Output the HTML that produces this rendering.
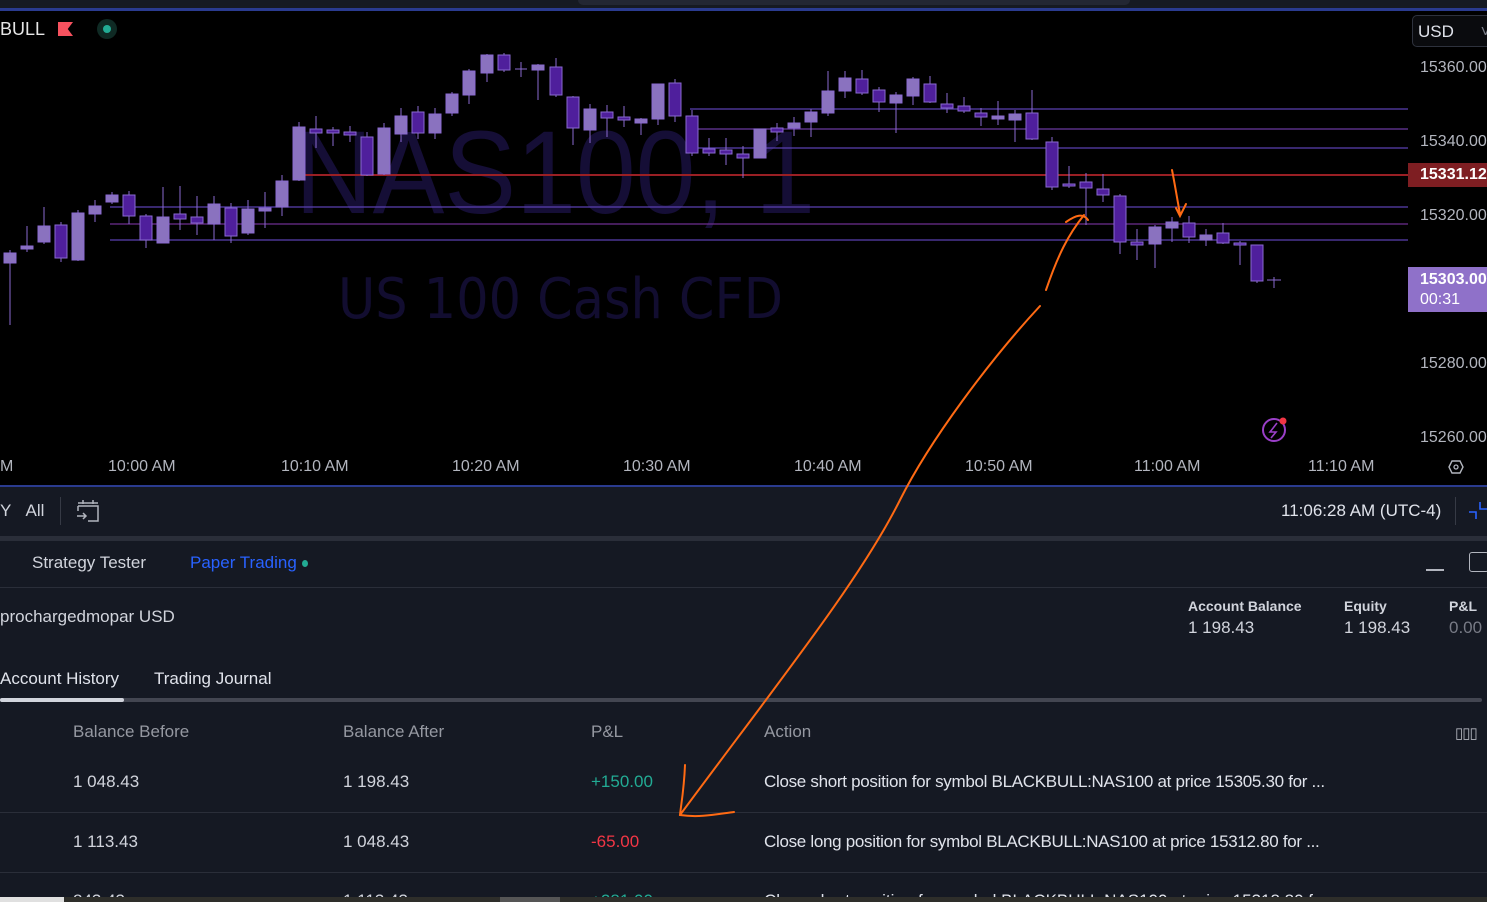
<!DOCTYPE html>
<html><head><meta charset="utf-8"><style>
*{margin:0;padding:0;box-sizing:border-box}
html,body{width:1487px;height:902px;overflow:hidden}
body{background:#000;font-family:"Liberation Sans",sans-serif;position:relative;color:#d1d4dc}
.a{position:absolute;white-space:nowrap}
.ax{color:#b2b5be;font-size:16px}
.t{font-size:17px}
</style></head><body>
<div class="a" style="left:0;top:0;width:1487px;height:8px;background:#161a22"></div>
<div class="a" style="left:578px;top:0;width:552px;height:5px;background:#232733;border-radius:0 0 6px 6px"></div>
<div class="a" style="left:0;top:8px;width:1487px;height:3px;background:#2a3b8f"></div>

<svg class="a" style="left:0;top:0" width="1487" height="485">
<text x="295" y="213" font-family="Liberation Sans" font-size="118" fill="#150e36" textLength="520" lengthAdjust="spacingAndGlyphs">NAS100, 1</text>
<text x="338" y="318" font-family="DejaVu Sans" font-size="56" fill="#120d30" textLength="445" lengthAdjust="spacingAndGlyphs">US 100 Cash CFD</text>
<g stroke-width="1.3">
<line x1="690" y1="109" x2="1408" y2="109" stroke="#5a40b0"/>
<line x1="690" y1="129" x2="1408" y2="129" stroke="#6a3aa0"/>
<line x1="690" y1="148" x2="1408" y2="148" stroke="#5a40b0"/>
<line x1="300" y1="175" x2="1408" y2="175" stroke="#9a1f24" stroke-width="2"/>
<line x1="110" y1="207" x2="1408" y2="207" stroke="#5a40b0"/>
<line x1="110" y1="224" x2="1408" y2="224" stroke="#6e2f90"/>
<line x1="110" y1="240" x2="1408" y2="240" stroke="#5a40b0"/>
</g>
<g stroke="#8a6ad0" stroke-width="1">
<line x1="10" y1="250" x2="10" y2="325"/><rect x="4" y="253" width="12" height="10" fill="#8a72bf"/>
<line x1="27" y1="226" x2="27" y2="252"/><rect x="21" y="246" width="12" height="3" fill="#8a72bf"/>
<line x1="44" y1="207" x2="44" y2="244"/><rect x="38" y="226" width="12" height="16" fill="#8a72bf"/>
<line x1="61" y1="222" x2="61" y2="262"/><rect x="55" y="225" width="12" height="33" fill="#4f1f9c"/>
<line x1="78" y1="210" x2="78" y2="261"/><rect x="72" y="213" width="12" height="47" fill="#8a72bf"/>
<line x1="95" y1="200" x2="95" y2="222"/><rect x="89" y="206" width="12" height="8" fill="#8a72bf"/>
<line x1="112" y1="192" x2="112" y2="204"/><rect x="106" y="195" width="12" height="7" fill="#8a72bf"/>
<line x1="129" y1="191" x2="129" y2="224"/><rect x="123" y="195" width="12" height="21" fill="#4f1f9c"/>
<line x1="146" y1="214" x2="146" y2="248"/><rect x="140" y="216" width="12" height="24" fill="#4f1f9c"/>
<line x1="163" y1="187" x2="163" y2="243"/><rect x="157" y="217" width="12" height="26" fill="#8a72bf"/>
<line x1="180" y1="186" x2="180" y2="230"/><rect x="174" y="214" width="12" height="5" fill="#4f1f9c"/>
<line x1="197" y1="196" x2="197" y2="235"/><rect x="191" y="217" width="12" height="6" fill="#4f1f9c"/>
<line x1="214" y1="196" x2="214" y2="240"/><rect x="208" y="204" width="12" height="20" fill="#8a72bf"/>
<line x1="231" y1="203" x2="231" y2="243"/><rect x="225" y="208" width="12" height="28" fill="#4f1f9c"/>
<line x1="248" y1="200" x2="248" y2="235"/><rect x="242" y="209" width="12" height="24" fill="#8a72bf"/>
<line x1="265" y1="192" x2="265" y2="228"/><rect x="259" y="208" width="12" height="3" fill="#8a72bf"/>
<line x1="282" y1="175" x2="282" y2="216"/><rect x="276" y="181" width="12" height="26" fill="#8a72bf"/>
<line x1="299" y1="122" x2="299" y2="181"/><rect x="293" y="127" width="12" height="53" fill="#8a72bf"/>
<line x1="316" y1="116" x2="316" y2="148"/><rect x="310" y="129" width="12" height="4" fill="#4f1f9c"/>
<line x1="333" y1="127" x2="333" y2="146"/><rect x="327" y="130" width="12" height="3" fill="#4f1f9c"/>
<line x1="350" y1="126" x2="350" y2="142"/><rect x="344" y="132" width="12" height="3" fill="#4f1f9c"/>
<line x1="367" y1="132" x2="367" y2="176"/><rect x="361" y="137" width="12" height="38" fill="#4f1f9c"/>
<line x1="384" y1="123" x2="384" y2="175"/><rect x="378" y="128" width="12" height="46" fill="#8a72bf"/>
<line x1="401" y1="108" x2="401" y2="142"/><rect x="395" y="116" width="12" height="18" fill="#8a72bf"/>
<line x1="418" y1="106" x2="418" y2="139"/><rect x="412" y="112" width="12" height="21" fill="#4f1f9c"/>
<line x1="435" y1="108" x2="435" y2="139"/><rect x="429" y="114" width="12" height="19" fill="#8a72bf"/>
<line x1="452" y1="92" x2="452" y2="116"/><rect x="446" y="94" width="12" height="19" fill="#8a72bf"/>
<line x1="469" y1="69" x2="469" y2="104"/><rect x="463" y="71" width="12" height="24" fill="#8a72bf"/>
<line x1="487" y1="54" x2="487" y2="82"/><rect x="481" y="55" width="12" height="18" fill="#8a72bf"/>
<line x1="504" y1="53" x2="504" y2="72"/><rect x="498" y="55" width="12" height="15" fill="#4f1f9c"/>
<line x1="521" y1="62" x2="521" y2="77"/><line x1="515" y1="69" x2="527" y2="69"/>
<line x1="538" y1="64" x2="538" y2="100"/><rect x="532" y="65" width="12" height="5" fill="#8a72bf"/>
<line x1="556" y1="58" x2="556" y2="97"/><rect x="550" y="67" width="12" height="28" fill="#4f1f9c"/>
<line x1="573" y1="96" x2="573" y2="145"/><rect x="567" y="97" width="12" height="31" fill="#4f1f9c"/>
<line x1="590" y1="104" x2="590" y2="143"/><rect x="584" y="109" width="12" height="21" fill="#8a72bf"/>
<line x1="607" y1="105" x2="607" y2="137"/><rect x="601" y="112" width="12" height="6" fill="#4f1f9c"/>
<line x1="624" y1="106" x2="624" y2="127"/><rect x="618" y="117" width="12" height="3" fill="#4f1f9c"/>
<line x1="641" y1="118" x2="641" y2="135"/><rect x="635" y="119" width="12" height="4" fill="#8a72bf"/>
<line x1="658" y1="84" x2="658" y2="125"/><rect x="652" y="84" width="12" height="35" fill="#8a72bf"/>
<line x1="675" y1="79" x2="675" y2="122"/><rect x="669" y="83" width="12" height="33" fill="#4f1f9c"/>
<line x1="692" y1="110" x2="692" y2="156"/><rect x="686" y="116" width="12" height="37" fill="#4f1f9c"/>
<line x1="709" y1="138" x2="709" y2="156"/><rect x="703" y="149" width="12" height="4" fill="#4f1f9c"/>
<line x1="726" y1="138" x2="726" y2="165"/><rect x="720" y="150" width="12" height="4" fill="#4f1f9c"/>
<line x1="743" y1="146" x2="743" y2="178"/><rect x="737" y="154" width="12" height="4" fill="#4f1f9c"/>
<line x1="760" y1="129" x2="760" y2="158"/><rect x="754" y="129" width="12" height="29" fill="#8a72bf"/>
<line x1="777" y1="123" x2="777" y2="141"/><rect x="771" y="128" width="12" height="4" fill="#4f1f9c"/>
<line x1="794" y1="117" x2="794" y2="136"/><rect x="788" y="123" width="12" height="5" fill="#8a72bf"/>
<line x1="811" y1="109" x2="811" y2="137"/><rect x="805" y="112" width="12" height="10" fill="#8a72bf"/>
<line x1="828" y1="71" x2="828" y2="116"/><rect x="822" y="91" width="12" height="22" fill="#8a72bf"/>
<line x1="845" y1="71" x2="845" y2="98"/><rect x="839" y="78" width="12" height="13" fill="#8a72bf"/>
<line x1="862" y1="70" x2="862" y2="95"/><rect x="856" y="79" width="12" height="14" fill="#4f1f9c"/>
<line x1="879" y1="87" x2="879" y2="112"/><rect x="873" y="90" width="12" height="12" fill="#4f1f9c"/>
<line x1="896" y1="92" x2="896" y2="133"/><rect x="890" y="95" width="12" height="8" fill="#8a72bf"/>
<line x1="913" y1="77" x2="913" y2="105"/><rect x="907" y="79" width="12" height="17" fill="#8a72bf"/>
<line x1="930" y1="76" x2="930" y2="103"/><rect x="924" y="84" width="12" height="18" fill="#4f1f9c"/>
<line x1="947" y1="93" x2="947" y2="113"/><rect x="941" y="104" width="12" height="4" fill="#4f1f9c"/>
<line x1="964" y1="97" x2="964" y2="113"/><rect x="958" y="106" width="12" height="5" fill="#4f1f9c"/>
<line x1="981" y1="108" x2="981" y2="126"/><rect x="975" y="113" width="12" height="4" fill="#4f1f9c"/>
<line x1="998" y1="101" x2="998" y2="125"/><rect x="992" y="116" width="12" height="3" fill="#8a72bf"/>
<line x1="1015" y1="110" x2="1015" y2="142"/><rect x="1009" y="114" width="12" height="6" fill="#8a72bf"/>
<line x1="1032" y1="90" x2="1032" y2="140"/><rect x="1026" y="113" width="12" height="26" fill="#4f1f9c"/>
<line x1="1052" y1="137" x2="1052" y2="190"/><rect x="1046" y="142" width="12" height="45" fill="#4f1f9c"/>
<line x1="1069" y1="166" x2="1069" y2="188"/><rect x="1063" y="184" width="12" height="2" fill="#4f1f9c"/>
<line x1="1086" y1="173" x2="1086" y2="225"/><rect x="1080" y="182" width="12" height="6" fill="#4f1f9c"/>
<line x1="1103" y1="174" x2="1103" y2="202"/><rect x="1097" y="189" width="12" height="6" fill="#4f1f9c"/>
<line x1="1120" y1="194" x2="1120" y2="254"/><rect x="1114" y="196" width="12" height="46" fill="#4f1f9c"/>
<line x1="1137" y1="229" x2="1137" y2="260"/><rect x="1131" y="242" width="12" height="3" fill="#4f1f9c"/>
<line x1="1155" y1="225" x2="1155" y2="268"/><rect x="1149" y="227" width="12" height="17" fill="#8a72bf"/>
<line x1="1172" y1="217" x2="1172" y2="242"/><rect x="1166" y="222" width="12" height="6" fill="#8a72bf"/>
<line x1="1189" y1="216" x2="1189" y2="243"/><rect x="1183" y="223" width="12" height="14" fill="#4f1f9c"/>
<line x1="1206" y1="229" x2="1206" y2="246"/><rect x="1200" y="235" width="12" height="5" fill="#8a72bf"/>
<line x1="1223" y1="223" x2="1223" y2="244"/><rect x="1217" y="233" width="12" height="10" fill="#4f1f9c"/>
<line x1="1240" y1="241" x2="1240" y2="265"/><rect x="1234" y="243" width="12" height="2" fill="#4f1f9c"/>
<line x1="1257" y1="245" x2="1257" y2="283"/><rect x="1251" y="245" width="12" height="36" fill="#4f1f9c"/>
<line x1="1274" y1="277" x2="1274" y2="288"/><line x1="1267" y1="280" x2="1281" y2="280"/>
</g>
<circle cx="1274" cy="430" r="11" fill="none" stroke="#9a3fc8" stroke-width="2"/>
<path d="M1277 423 L1270 432 L1276 432 L1271 438" stroke="#9a3fc8" stroke-width="1.6" fill="none"/>
<circle cx="1283" cy="421" r="3.5" fill="#f23645"/>
<polygon points="1449,467 1452,461 1460,461 1463,467 1460,473 1452,473" fill="none" stroke="#b2b5be" stroke-width="1.4"/>
<circle cx="1456" cy="467" r="2" fill="none" stroke="#b2b5be" stroke-width="1.3"/>
</svg>

<div class="a" style="left:0;top:19px;font-size:18px;color:#e6e6e6">BULL</div>
<div class="a" style="left:58px;top:22px;width:15px;height:14px;background:#f7525f;clip-path:polygon(0 0,100% 0,65% 50%,100% 100%,0 100%)"></div>
<div class="a" style="left:97px;top:19px;width:20px;height:20px;border-radius:50%;background:#0f2a24"></div>
<div class="a" style="left:103px;top:25px;width:8px;height:8px;border-radius:50%;background:#22ab94"></div>

<div class="a" style="left:1412px;top:15px;width:80px;height:32px;border:1px solid #2e323d;border-radius:5px;background:#0a0b0e;color:#e0e3eb;font-size:17px;padding:6px 0 0 5px">USD <span style="color:#787b86;margin-left:22px">˅</span></div>
<div class="a ax" style="left:1420px;top:59px">15360.00</div>
<div class="a ax" style="left:1420px;top:133px">15340.00</div>
<div class="a" style="left:1408px;top:163px;width:79px;height:24px;background:#7e1e22;color:#fff;font-size:16px;font-weight:bold;padding:3px 0 0 12px">15331.12</div>
<div class="a ax" style="left:1420px;top:207px">15320.00</div>
<div class="a" style="left:1408px;top:267px;width:79px;height:45px;background:#8f71c9;color:#fff;font-size:16px;font-weight:bold;padding:3px 0 0 12px;line-height:20px">15303.00<br><span style="font-weight:normal">00:31</span></div>
<div class="a ax" style="left:1420px;top:355px">15280.00</div>
<div class="a ax" style="left:1420px;top:429px">15260.00</div>

<div class="a ax" style="left:0;top:458px">M</div>
<div class="a ax" style="left:108px;top:458px">10:00 AM</div>
<div class="a ax" style="left:281px;top:458px">10:10 AM</div>
<div class="a ax" style="left:452px;top:458px">10:20 AM</div>
<div class="a ax" style="left:623px;top:458px">10:30 AM</div>
<div class="a ax" style="left:794px;top:458px">10:40 AM</div>
<div class="a ax" style="left:965px;top:458px">10:50 AM</div>
<div class="a ax" style="left:1134px;top:458px">11:00 AM</div>
<div class="a ax" style="left:1308px;top:458px">11:10 AM</div>

<div class="a" style="left:0;top:485px;width:1487px;height:2px;background:#2a3b8f"></div>
<div class="a" style="left:0;top:487px;width:1487px;height:415px;background:#151923"></div>
<div class="a t" style="left:0;top:501px;color:#d1d4dc">Y&nbsp;&nbsp;&nbsp;All</div>
<div class="a" style="left:60px;top:497px;width:1px;height:28px;background:#363a45"></div>
<svg class="a" style="left:75px;top:498px" width="26" height="26"><g fill="none" stroke="#b2b5be" stroke-width="1.5"><path d="M3 8 H23 V23 H13 M3 8 V13 M3 5 H23 M8 2 V6 M18 2 V6 M2 18 H11 M8 15 L11 18 L8 21"/></g></svg>
<div class="a t" style="left:1281px;top:501px;color:#e0e3eb">11:06:28 AM (UTC-4)</div>
<div class="a" style="left:1455px;top:497px;width:1px;height:28px;background:#363a45"></div>
<svg class="a" style="left:1468px;top:500px" width="19" height="22"><path d="M1 12 H8 V19 M12 2 V9 H19" fill="none" stroke="#2962ff" stroke-width="1.6"/></svg>
<div class="a" style="left:0;top:536px;width:1487px;height:5px;background:#2a2e39"></div>

<div class="a t" style="left:32px;top:553px;color:#d1d4dc">Strategy Tester</div>
<div class="a t" style="left:190px;top:553px;color:#2962ff">Paper Trading</div>
<div class="a" style="left:302px;top:560px;width:6px;height:7px;border-radius:50%;background:#22ab94"></div>
<div class="a" style="left:1426px;top:569px;width:18px;height:2px;background:#b2b5be"></div>
<div class="a" style="left:1469px;top:552px;width:20px;height:20px;border:1.5px solid #b2b5be;border-radius:3px"></div>
<div class="a" style="left:0;top:587px;width:1487px;height:1px;background:#2a2e39"></div>

<div class="a t" style="left:0;top:607px;color:#d1d4dc">prochargedmopar USD</div>
<div class="a" style="left:1188px;top:598px;font-size:14px;color:#d1d4dc;font-weight:bold">Account Balance</div>
<div class="a t" style="left:1188px;top:618px;color:#d1d4dc">1 198.43</div>
<div class="a" style="left:1344px;top:598px;font-size:14px;color:#d1d4dc;font-weight:bold">Equity</div>
<div class="a t" style="left:1344px;top:618px;color:#d1d4dc">1 198.43</div>
<div class="a" style="left:1449px;top:598px;font-size:14px;color:#d1d4dc;font-weight:bold">P&amp;L</div>
<div class="a t" style="left:1449px;top:618px;color:#787b86">0.00</div>

<div class="a t" style="left:0;top:669px;color:#e0e3eb">Account History</div>
<div class="a t" style="left:154px;top:669px;color:#e0e3eb">Trading Journal</div>
<div class="a" style="left:0;top:698px;width:1482px;height:4px;background:#434651;border-radius:2px"></div>
<div class="a" style="left:0;top:698px;width:124px;height:4px;background:#d1d4dc;border-radius:2px"></div>

<div class="a t" style="left:73px;top:722px;color:#9598a1">Balance Before</div>
<div class="a t" style="left:343px;top:722px;color:#9598a1">Balance After</div>
<div class="a t" style="left:591px;top:722px;color:#9598a1">P&amp;L</div>
<div class="a t" style="left:764px;top:722px;color:#9598a1">Action</div>
<div class="a" style="left:1455px;top:724px;font-size:15px;color:#b2b5be;letter-spacing:-1px">▯▯▯</div>

<div class="a t" style="left:73px;top:772px;color:#d1d4dc">1 048.43</div>
<div class="a t" style="left:343px;top:772px;color:#d1d4dc">1 198.43</div>
<div class="a t" style="left:591px;top:772px;color:#22ab94">+150.00</div>
<div class="a t" style="left:764px;top:772px;color:#e0e3eb;letter-spacing:-0.3px">Close short position for symbol BLACKBULL:NAS100 at price 15305.30 for ...</div>
<div class="a" style="left:0;top:812px;width:1487px;height:1px;background:#2a2e39"></div>
<div class="a t" style="left:73px;top:832px;color:#d1d4dc">1 113.43</div>
<div class="a t" style="left:343px;top:832px;color:#d1d4dc">1 048.43</div>
<div class="a t" style="left:591px;top:832px;color:#f23645">-65.00</div>
<div class="a t" style="left:764px;top:832px;color:#e0e3eb;letter-spacing:-0.3px">Close long position for symbol BLACKBULL:NAS100 at price 15312.80 for ...</div>
<div class="a" style="left:0;top:872px;width:1487px;height:1px;background:#2a2e39"></div>
<div class="a t" style="left:73px;top:891px;color:#d1d4dc">843.43</div>
<div class="a t" style="left:343px;top:891px;color:#d1d4dc">1 113.43</div>
<div class="a t" style="left:591px;top:891px;color:#22ab94">+281.00</div>
<div class="a t" style="left:764px;top:891px;color:#e0e3eb">Close short position for symbol BLACKBULL:NAS100 at price 15318.80 for ...</div>
<div class="a" style="left:0;top:897px;width:1487px;height:5px;background:#2e2e2a"></div>
<div class="a" style="left:0;top:897px;width:64px;height:5px;background:#e0e0e0"></div>
<div class="a" style="left:500px;top:897px;width:60px;height:5px;background:#555"></div>

<svg class="a" style="left:0;top:0" width="1487" height="902">
<g fill="none" stroke="#ff6a13" stroke-width="2" stroke-linecap="round">
<path d="M1046 290 C1058 255 1068 235 1084 215 M1066 222 C1076 215 1083 213 1088 220"/>
<path d="M1172 170 C1175 185 1177 198 1180 214 M1176 208 L1180 216 L1186 204"/>
<path d="M1040 306 C990 360 930 440 900 500 C860 580 780 680 680 815 M685 765 C684 790 681 805 680 815 C700 818 718 814 734 812"/>
</g>
</svg>
</body></html>
